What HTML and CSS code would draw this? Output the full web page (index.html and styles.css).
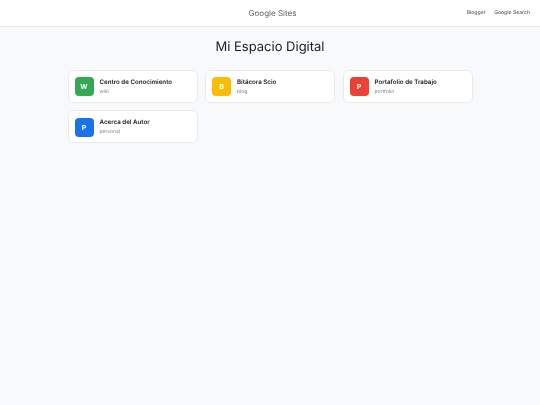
FILE: index.html
```html
<!DOCTYPE html>
<html lang="es">
<head>
    <meta charset="UTF-8">
    <meta name="viewport" content="width=device-width, initial-scale=1.0">
    <title>Mi Espacio Digital</title>
    <link rel="stylesheet" href="styles.css">
</head>
<body>
    <!-- Header -->
    <header class="site-header">
        <div class="brand">Google Sites</div>
        <nav class="header-links">
            <a href="#">Blogger</a>
            <a href="#">Google Search</a>
        </nav>
    </header>

    <main class="content">
        <h1>Mi Espacio Digital</h1>

        <!-- Site cards -->
        <div class="card-grid">
            <a class="card" href="#">
                <span class="card-icon green">W</span>
                <span class="card-text">
                    <span class="card-title">Centro de Conocimiento</span>
                    <span class="card-sub">wiki</span>
                </span>
            </a>
            <a class="card" href="#">
                <span class="card-icon yellow">B</span>
                <span class="card-text">
                    <span class="card-title">Bitácora Scio</span>
                    <span class="card-sub">blog</span>
                </span>
            </a>
            <a class="card" href="#">
                <span class="card-icon red">P</span>
                <span class="card-text">
                    <span class="card-title">Portafolio de Trabajo</span>
                    <span class="card-sub">portfolio</span>
                </span>
            </a>
            <a class="card" href="#">
                <span class="card-icon blue">P</span>
                <span class="card-text">
                    <span class="card-title">Acerca del Autor</span>
                    <span class="card-sub">personal</span>
                </span>
            </a>
        </div>
    </main>
</body>
</html>
```

FILE: styles.css
```css
body {
    font-family: Inter, "Liberation Sans", sans-serif;
    text-rendering: geometricPrecision;
    background-color: #f8f9fa;
    margin: 0;
    padding: 0;
    min-height: 405px;
    will-change: opacity; /* greyscale text */
}

a {
    color: inherit;
    text-decoration: none;
}

.site-header {
    display: flex;
    align-items: center;
    justify-content: center;
    position: relative;
    height: 26px;
    padding-left: 5px;
    background-color: #fff;
    border-bottom: 1px solid #e8eaed;
}

.brand {
    font-size: 8px;
    color: #5f6368;
    will-change: opacity;
}

.header-links {
    position: absolute;
    top: 0;
    right: 10px;
    height: 26px;
    display: flex;
    align-items: center;
    gap: 8.5px;
    font-size: 5.1px;
    font-weight: 500;
    color: #5f6368;
    will-change: opacity;
}

.content {
    width: 405px;
    margin: 0 auto;
}

h1 {
    margin: 0;
    padding-top: 10px;
    text-align: center;
    font-size: 13px;
    line-height: 20px;
    font-weight: 400;
    color: #202124;
}

.card-grid {
    display: grid;
    grid-template-columns: repeat(3, 1fr);
    gap: 7.5px;
    margin-top: 12.5px;
}

.card {
    display: flex;
    align-items: center;
    gap: 6px;
    height: 33px;
    box-sizing: border-box;
    padding: 1px 6px 0;
    background-color: #fff;
    border: 1px solid #e8eaed;
    border-radius: 6px;
}

.card-icon {
    flex: none;
    display: flex;
    align-items: center;
    justify-content: center;
    width: 19px;
    height: 19px;
    border-radius: 4px;
    color: #fff;
    font-size: 7px;
    font-weight: 700;
}

.green { background-color: #34a853; }
.yellow { background-color: #fbbc05; }
.red { background-color: #ea4335; }
.blue { background-color: #1a73e8; }

.card-text {
    display: flex;
    flex-direction: column;
    gap: 3px;
    min-width: 0;
}

.card-title {
    font-size: 6.2px;
    font-weight: 600;
    color: #202124;
}

.card-sub {
    font-size: 5px;
    color: #80868b;
}
```
